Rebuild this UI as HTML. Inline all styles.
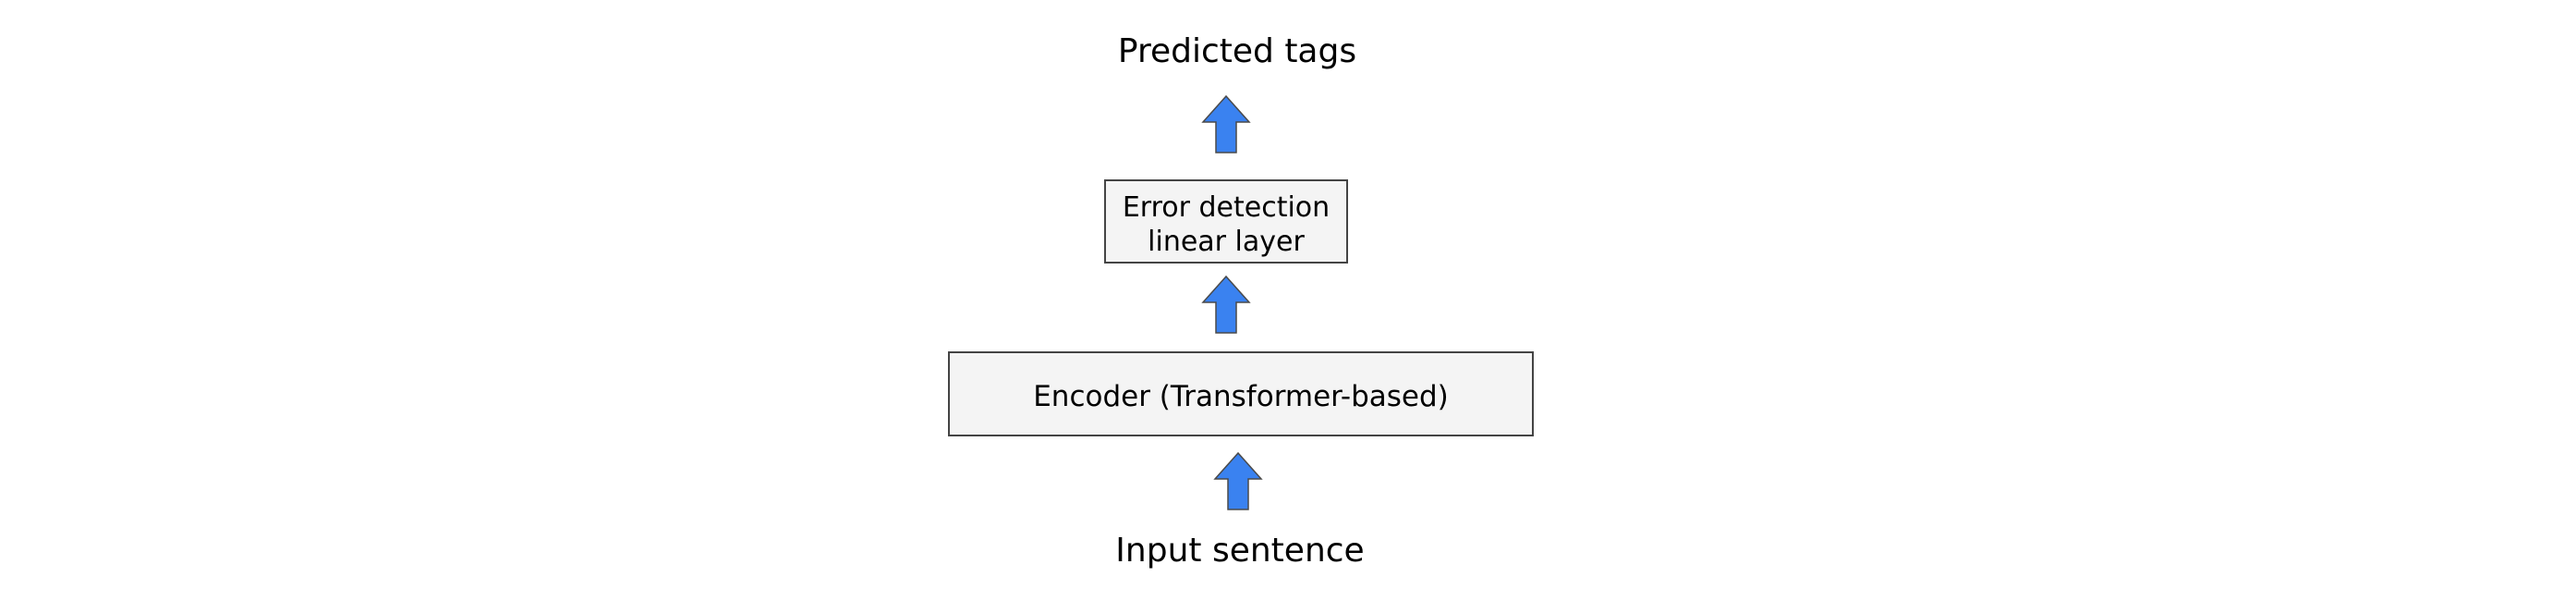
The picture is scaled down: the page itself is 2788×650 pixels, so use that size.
<!DOCTYPE html>
<html><head><style>
html,body{margin:0;padding:0;background:#fff;width:2788px;height:650px;overflow:hidden;font-family:"DejaVu Sans","Liberation Sans",sans-serif;color:#000}
.t{position:absolute;text-align:center;white-space:nowrap}
.box{position:absolute;background:#f4f4f4;border:2px solid #444;box-sizing:border-box;display:flex;align-items:center;justify-content:center;text-align:center;font-size:30px;line-height:37px;padding-top:6px}
svg{position:absolute;left:0;top:0}
</style></head><body>
<div class="t" style="left:1139px;width:400px;top:34px;font-size:36px;line-height:44px">Predicted tags</div>
<div class="box" style="left:1195px;top:194px;width:264px;height:91px">Error detection<br>linear layer</div>
<div class="box" style="left:1026px;top:380px;width:634px;height:92px;font-size:31px">Encoder (Transformer-based)</div>
<div class="t" style="left:1142px;width:400px;top:574px;font-size:36px;line-height:44px">Input sentence</div>
<svg width="2788" height="650">
<g fill="#3a82f0" stroke="#4a4a4a" stroke-width="1.5">
<polygon points="1327,104 1352,132 1338,132 1338,165 1316,165 1316,132 1302,132"/>
<polygon points="1327,299 1352,327 1338,327 1338,360 1316,360 1316,327 1302,327"/>
<polygon points="1340,490 1365,518 1351,518 1351,551 1329,551 1329,518 1315,518"/>
</g>
</svg>
</body></html>
